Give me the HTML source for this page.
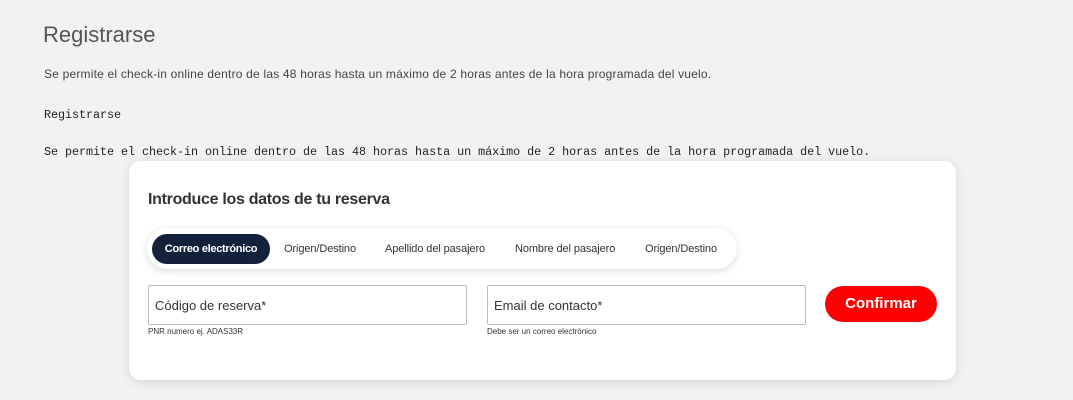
<!DOCTYPE html>
<html><head><meta charset="utf-8"><style>
body{margin:0;width:1073px;height:400px;background:#f2f2f2;font-family:"Liberation Sans",sans-serif;overflow:hidden;position:relative;color:#333}
.h1{position:absolute;left:43px;top:22px;font-size:22px;color:#555;font-weight:300}
.p{position:absolute;left:44px;top:67px;font-size:12px;color:#444;letter-spacing:0.2px}
.m{position:absolute;left:44px;font-family:"Liberation Mono",monospace;font-size:11.75px;color:#222;letter-spacing:-0.05px}
.card{position:absolute;left:129px;top:161px;width:827px;height:219px;background:#fff;border-radius:12px;box-shadow:0 2px 10px rgba(0,0,0,.12)}
.t{position:absolute;left:19px;top:30px;font-size:16px;font-weight:bold;color:#333;letter-spacing:-0.3px}
.tabs{position:absolute;left:18px;top:67px;width:590px;height:41px;border-radius:21px;background:#fff;box-shadow:0 2px 8px rgba(0,0,0,.14)}
.tab{position:absolute;top:6px;height:30px;line-height:30px;font-size:11px;color:#333;letter-spacing:-0.1px}
.act{left:5px;width:118px;background:#14213d;color:#fff;border-radius:15px;text-align:center;font-weight:bold;letter-spacing:-0.3px}
.in{position:absolute;top:124px;width:319px;height:40px;border:1px solid #bbb;border-radius:2px;box-sizing:border-box;font-size:13px;color:#333;padding:12px 0 0 6px}
.hint{position:absolute;top:166px;font-size:8px;color:#333}
.btn{position:absolute;left:696px;top:125px;width:112px;height:36px;border-radius:18px;background:#f00;color:#fff;font-weight:bold;font-size:15px;text-align:center;line-height:36px}
</style></head><body>
<div class="h1">Registrarse</div>
<div class="p">Se permite el check-in online dentro de las 48 horas hasta un máximo de 2 horas antes de la hora programada del vuelo.</div>
<div class="m" style="top:108px">Registrarse</div>
<div class="m" style="top:145px">Se permite el check-in online dentro de las 48 horas hasta un máximo de 2 horas antes de la hora programada del vuelo.</div>
<div class="card">
<div class="t">Introduce los datos de tu reserva</div>
<div class="tabs">
<div class="tab act">Correo electrónico</div>
<div class="tab" style="left:137px">Origen/Destino</div>
<div class="tab" style="left:238px">Apellido del pasajero</div>
<div class="tab" style="left:368px">Nombre del pasajero</div>
<div class="tab" style="left:498px">Origen/Destino</div>
</div>
<div class="in" style="left:19px">Código de reserva*</div>
<div class="hint" style="left:19px">PNR numero ej. ADAS33R</div>
<div class="in" style="left:358px">Email de contacto*</div>
<div class="hint" style="left:358px">Debe ser un correo electrónico</div>
<div class="btn">Confirmar</div>
</div>
</body></html>
